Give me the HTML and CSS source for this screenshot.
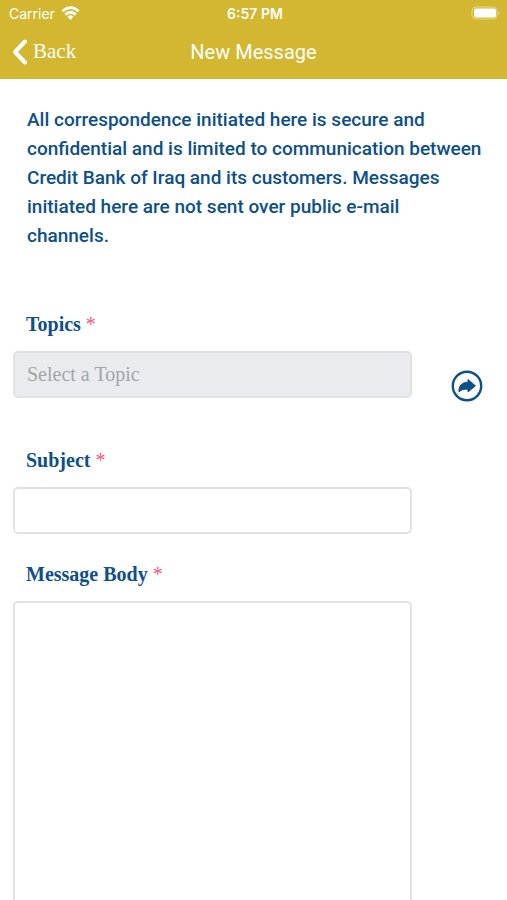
FILE: index.html
```
<!DOCTYPE html>
<html lang="en">
<head>
  <meta charset="UTF-8">
  <meta name="viewport" content="width=device-width, initial-scale=1">
  <title>New Message</title>
  <link rel="stylesheet" href="styles.css">
</head>
<body>

  <header class="header">
    <div class="status-bar">
      <div class="carrier">
        <span>Carrier</span>
        <svg width="19" height="14" viewBox="0 0 18 14" fill="none" stroke="#fff" stroke-width="2.8">
          <path d="M1 5.2 Q9 -2 17 5.2"/>
          <path d="M3.8 8.6 Q9 4 14.2 8.6"/>
          <path d="M6 10.6 Q9 8 12 10.6 L9 14 Z" fill="#fff" stroke="none"/>
        </svg>
      </div>
      <div class="time">6:57 PM</div>
      <svg class="battery" width="30" height="14" viewBox="0 0 30 14">
        <rect x="1" y="1" width="25" height="12" rx="4" fill="none" stroke="#fff" stroke-opacity="0.45"/>
        <rect x="3" y="2.5" width="22" height="9" rx="2" fill="#fff"/>
        <path d="M27.5 5 Q29.5 7 27.5 9 Z" fill="#fff" fill-opacity="0.5"/>
      </svg>
    </div>
    <nav class="nav">
      <a class="back" href="#">
        <svg width="16" height="26" viewBox="0 0 16 26" fill="none" stroke="#fff" stroke-width="4" stroke-linecap="round" stroke-linejoin="round">
          <path d="M13 2.5 L3 13 L13 23.5"/>
        </svg>
        <span>Back</span>
      </a>
      <h1 class="title">New Message</h1>
    </nav>
  </header>

  <main class="content">
    <p class="notice">All correspondence initiated here is secure and confidential and is limited to communication between Credit Bank of Iraq and its customers. Messages initiated here are not sent over public e-mail channels.</p>

    <form class="form">
      <label class="label" for="topic">Topics <span class="required">*</span></label>
      <div class="row">
        <input class="field" id="topic" type="text" placeholder="Select a Topic" readonly>
        <button class="pick" type="button" aria-label="Choose topic">
          <svg width="32" height="32" viewBox="0 0 32 32">
            <circle cx="16" cy="16" r="14.2" fill="none" stroke="#0d4f8b" stroke-width="2.4"/>
            <path d="M17 9.6 L24.4 15.8 L17 22 V19.2 C13 19 11 19.4 8 21.8 C7.6 15.8 10.8 12.4 17 12.2 Z" fill="#0d4f8b" stroke="#0d4f8b" stroke-linejoin="round"/>
          </svg>
        </button>
      </div>

      <label class="label" for="subject">Subject <span class="required">*</span></label>
      <input class="field" id="subject" type="text">

      <label class="label label-body" for="message">Message Body <span class="required">*</span></label>
      <textarea class="field message" id="message"></textarea>
    </form>
  </main>

</body>
</html>
```
FILE: styles.css
```
* {
  box-sizing: border-box;
}
body {
  margin: 0;
  background: #fff;
  color: #0d4f8b;
  font-family: "Liberation Serif", "Times New Roman", serif;
}
.header {
  background: #d3b730;
  color: #fff;
  padding-bottom: 8px;
}
.status-bar {
  display: grid;
  grid-template-columns: 1fr auto 1fr;
  align-items: center;
  height: 26px;
  padding: 0 6px 0 9px;
  font-family: Inter, sans-serif;
  font-size: 14px;
}
.carrier {
  display: flex;
  align-items: center;
  gap: 6px;
}
.time {
  font-weight: 600;
}
.battery {
  justify-self: end;
}
.nav {
  display: grid;
  grid-template-columns: 1fr auto 1fr;
  align-items: center;
  height: 45px;
  padding: 6px 12px 0;
}
.nav svg {
  flex: none;
}
.back {
  display: flex;
  align-items: center;
  gap: 5px;
  color: #fff;
  font-size: 21px;
  text-decoration: none;
}
.title {
  margin: 0;
  font-family: Roboto, sans-serif;
  font-size: 20px;
  font-weight: 400;
}
.content {
  padding: 26px 13px 40px;
}
.notice {
  margin: 0;
  padding: 0 8px 0 14px;
  font-family: Roboto, sans-serif;
  font-size: 19px;
  font-weight: 500;
  line-height: 29px;
}
.form {
  padding: 62px 82px 0 0;
}
.label {
  display: block;
  margin-bottom: 15px;
  padding-left: 13px;
  font-size: 20px;
  font-weight: bold;
  line-height: 24px;
}
.label-body {
  margin-top: 28px;
}
.required {
  color: #ee5a7c;
  font-weight: normal;
}
.row {
  display: flex;
  align-items: flex-start;
  gap: 39px;
  margin: 0 -71px 46px 0;
}
.field {
  display: block;
  width: 100%;
  height: 47px;
  padding: 0 12px;
  border: 2px solid #e0e2e3;
  border-radius: 5px;
  background: #fff;
  color: #0d4f8b;
  font-family: inherit;
  font-size: 20px;
}
.field:read-only {
  background: #e9ebee;
}
.field::placeholder {
  color: #a2a5a8;
  opacity: 1;
}
.message {
  height: 400px;
  padding: 12px;
  resize: none;
}
.pick {
  margin-top: 19px;
  padding: 0;
  border: 0;
  background: none;
  line-height: 0;
  cursor: pointer;
}
```
